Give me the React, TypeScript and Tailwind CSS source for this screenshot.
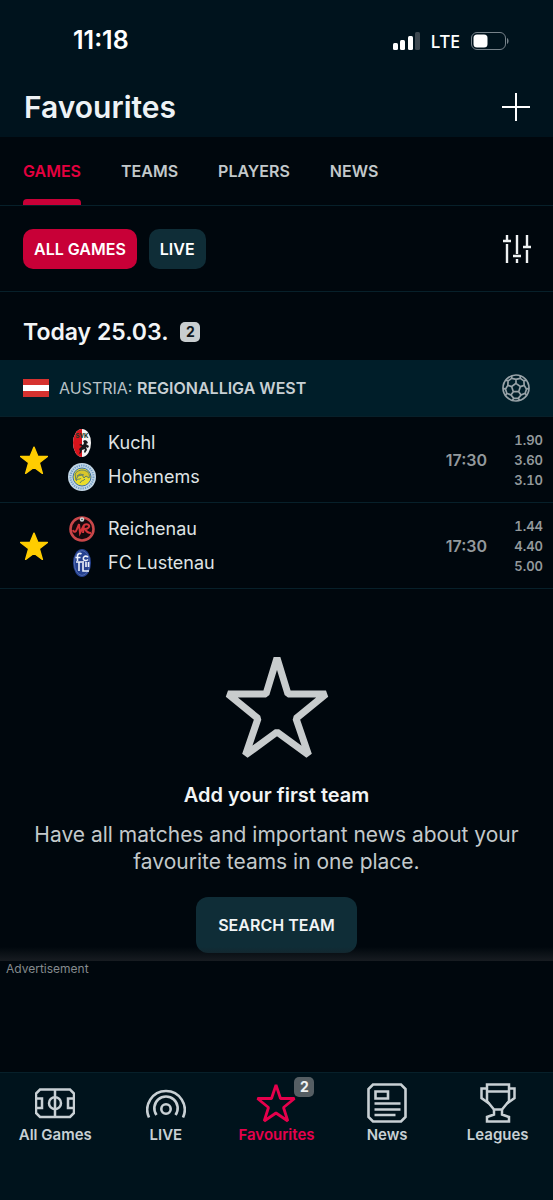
import { useState } from 'react';
import type { ReactNode } from 'react';

interface Team {
  name: string;
  crest: ReactNode;
}

interface Match {
  id: number;
  home: Team;
  away: Team;
  time: string;
  odds: string[];
}

const STAR_POINTS = '50,4 64,37.5 98,37.5 69,60 80,98 50,76 20,98 31,60 2,37.5 36,37.5';

function KuchlCrest() {
  return (
    <svg viewBox="0 0 28 28" className="size-7" aria-hidden="true">
      <ellipse cx="14" cy="14" rx="9" ry="14" fill="#f4f4f4" />
      <path d="M14 0A9 14 0 0 0 14 28Z" fill="#d8131b" />
      <path
        d="M17 11l2 1 1 2-2 1 3 2-1 2-2-1 1 3-2 3-1-1 1-3-3 1-1 3-2 1 1-3-1-2 3-3-3-1 2-1 2 1 1-2-1-2z"
        fill="#17191b"
      />
      <text x="14" y="9" textAnchor="middle" fontSize="6" fontWeight="800" fill="#1d3b2c">
        SVK
      </text>
    </svg>
  );
}

function HohenemsCrest() {
  return (
    <svg viewBox="0 0 28 28" className="size-7" aria-hidden="true">
      <circle cx="14" cy="14" r="14" fill="#c3d7e6" />
      <circle cx="14" cy="14" r="11.5" fill="none" stroke="#6f9cc6" strokeWidth="2" strokeDasharray="1.2 1.1" />
      <circle cx="14" cy="14" r="9" fill="#e9dc2b" stroke="#3b6fa3" strokeWidth="1" />
      <path d="M7 11c2-4 8-5 11-3 3 1 4 4 3 7l-3-2-2 2-2-3-4 1-2 4z" fill="#d9c62b" stroke="#5f7d6b" strokeWidth="1" />
      <path d="M8 18c2-3 4-1 5-3M12 20c1-3 4-2 5-4M9 13l3-2 4 1" fill="none" stroke="#5f7d6b" strokeWidth="1" />
    </svg>
  );
}

function ReichenauCrest() {
  return (
    <svg viewBox="0 0 28 28" className="size-7" aria-hidden="true">
      <circle cx="14" cy="14" r="11.5" fill="#16090d" stroke="#c9474a" strokeWidth="2.6" />
      <path
        d="M5 15c1 3 3 2 4-1l2-5 1 9 4-8-1 8M16 10c4-2 7 1 4 3-1 1-3 1-3 1s2 4 6 4"
        fill="none"
        stroke="#d5353a"
        strokeWidth="2"
      />
      <circle cx="14" cy="4.5" r="2.2" fill="#cfd6d6" />
      <circle cx="14" cy="4.5" r="0.8" fill="#27313a" />
    </svg>
  );
}

function LustenauCrest() {
  return (
    <svg viewBox="0 0 28 28" className="size-7" aria-hidden="true">
      <ellipse cx="14" cy="14" rx="9" ry="14" fill="#25418f" />
      <ellipse cx="14" cy="14" rx="7.6" ry="12.4" fill="none" stroke="#6f87c4" strokeWidth="0.6" />
      <path
        d="M13.5 5c-2-1.5-4 0-4 2v5M7.5 8.500h5M20 8c-3-2-5.500 0-4.500 2.500 1 1.500 3 1.500 4.500 0M8 13h6M11 13v9M15 12v10h6M18 13v5M20.500 13v5"
        fill="none"
        stroke="#eef2fa"
        strokeWidth="1.6"
      />
    </svg>
  );
}

function FootballIcon() {
  const at = (radius: number, degrees: number) => {
    const rad = (degrees * Math.PI) / 180;
    return `${(14 + radius * Math.cos(rad)).toFixed(2)} ${(14 + radius * Math.sin(rad)).toFixed(2)}`;
  };
  const spokes = [-90, -18, 54, 126, 198];
  const pentagon = `M${spokes.map((a) => at(4.6, a)).join('L')}Z`;
  const seams = spokes
    .map(
      (a) =>
        `M${at(4.6, a)}L${at(8.6, a)}M${at(13, a - 19)}L${at(10.6, a - 24)}L${at(8.6, a)}L${at(10.6, a + 24)}L${at(13, a + 19)}M${at(10.6, a + 24)}L${at(10.6, a + 48)}`,
    )
    .join('');

  return (
    <svg viewBox="0 0 28 28" className="size-7" fill="none" stroke="#98a3a8" strokeWidth="1.7" aria-hidden="true">
      <circle cx="14" cy="14" r="13" />
      <path d={pentagon + seams} />
    </svg>
  );
}

function PitchIcon() {
  return (
    <svg viewBox="0 0 40 40" className="size-10" fill="none" stroke="currentColor" strokeWidth="2.5" aria-hidden="true">
      <path d="M5 6.500h30l4 4v19.500l-4 4H5l-4-4V10.500zM20 6.500V34M1 15.500h6V25H1M39 15.500h-6V25h6" />
      <circle cx="20" cy="20.200" r="6" />
    </svg>
  );
}

function LiveIcon() {
  return (
    <svg viewBox="0 0 40 40" className="size-10" fill="none" stroke="currentColor" strokeWidth="2.6" aria-hidden="true">
      <circle cx="20" cy="26" r="4.700" />
      <path d="M10.500 32a11.700 11.700 0 1 1 19 0" />
      <path d="M3 34.500a18.700 18.700 0 1 1 34 0" />
    </svg>
  );
}

function StarIcon() {
  return (
    <svg viewBox="0 0 40 40" className="size-10" fill="none" stroke="currentColor" strokeWidth="2.8" aria-hidden="true">
      <path
        d="M20 2l4.500 13.500H38.500L27.500 24.500 31.800 38 20 30 8.200 38 12.500 24.500 1.500 15.500H15.500z"
        strokeLinejoin="bevel"
      />
    </svg>
  );
}

function NewsIcon() {
  return (
    <svg viewBox="0 0 40 40" className="size-10" fill="none" stroke="currentColor" strokeWidth="2.6" aria-hidden="true">
      <path d="M6 1.500h28l4.500 4.500v28L34 38.500H6L1.500 34V6z" />
      <path d="M8.500 8.500h12.500v7H8.500zM7.500 20.500h26M7.500 26.500h26M7.500 32h21" />
    </svg>
  );
}

function TrophyIcon() {
  return (
    <svg viewBox="0 0 40 40" className="size-10" fill="none" stroke="currentColor" strokeWidth="2.5" aria-hidden="true">
      <path d="M9 1.500h22v16.500l-7 8.500h-8l-7-8.500zM9 8.500H31" />
      <path d="M9 5.500H3.500v9.500l7.500 5.500M31 5.500h5.500v9.500L29 20.500" />
      <path d="M16 26.500v5l-7 2.500v4.500h22V34l-7-2.500v-5" />
    </svg>
  );
}

const tabs = ['GAMES', 'TEAMS', 'PLAYERS', 'NEWS'];

const matches: Match[] = [
  {
    id: 1,
    home: { name: 'Kuchl', crest: <KuchlCrest /> },
    away: { name: 'Hohenems', crest: <HohenemsCrest /> },
    time: '17:30',
    odds: ['1.90', '3.60', '3.10'],
  },
  {
    id: 2,
    home: { name: 'Reichenau', crest: <ReichenauCrest /> },
    away: { name: 'FC Lustenau', crest: <LustenauCrest /> },
    time: '17:30',
    odds: ['1.44', '4.40', '5.00'],
  },
];

const navItems = [
  { label: 'All Games', icon: <PitchIcon /> },
  { label: 'LIVE', icon: <LiveIcon /> },
  { label: 'Favourites', icon: <StarIcon />, badge: 2 },
  { label: 'News', icon: <NewsIcon /> },
  { label: 'Leagues', icon: <TrophyIcon /> },
];

function StatusBar() {
  return (
    <div className="flex h-[82px] items-center justify-between pr-11 pl-[73px]">
      <span className="text-[25px] font-semibold text-white">11:18</span>
      <div className="flex items-center gap-[11px]">
        <svg viewBox="0 0 27 18" className="h-[18px] w-[27px]" fill="#fff" aria-hidden="true">
          <rect x="0" y="11" width="5" height="7" rx="1.5" />
          <rect x="7" y="8" width="5" height="10" rx="1.5" />
          <rect x="15" y="4" width="5" height="14" rx="1.5" />
          <rect x="22" y="0" width="5" height="18" rx="1.5" fill="#3d4850" />
        </svg>
        <span className="font-['Noto_Sans',sans-serif] text-lg font-medium text-white">LTE</span>
        <svg viewBox="0 0 38 18" className="h-[18px] w-[38px]" aria-hidden="true">
          <rect x="0.5" y="0.5" width="34" height="17" rx="5.5" fill="none" stroke="#77828a" />
          <rect x="2.5" y="2.5" width="14" height="13" rx="3.5" fill="#fff" />
          <path d="M36 6v6c2-1 2-5 0-6z" fill="#77828a" />
        </svg>
      </div>
    </div>
  );
}

function MatchRow({ match }: { match: Match }) {
  const [starred, setStarred] = useState(true);

  return (
    <li className="flex h-[86px] items-center border-b border-[#07202a] pr-2.5 pl-5">
      <button
        type="button"
        aria-label="Toggle favourite"
        aria-pressed={starred}
        onClick={() => setStarred(!starred)}
        className={starred ? 'text-[#ffcd00]' : 'text-[#34444c]'}
      >
        <svg viewBox="0 0 100 100" className="size-7" aria-hidden="true">
          <polygon points={STAR_POINTS} fill="currentColor" stroke="currentColor" strokeWidth="5" strokeLinejoin="round" />
        </svg>
      </button>
      <div className="ml-5 flex flex-1 flex-col gap-1.5">
        {[match.home, match.away].map((team) => (
          <div key={team.name} className="flex items-center gap-3">
            {team.crest}
            <span className="text-lg leading-7 text-[#dfe3e4]">{team.name}</span>
          </div>
        ))}
      </div>
      <span className="text-base font-semibold text-[#93999c]">{match.time}</span>
      <div className="ml-5 w-9 text-right text-[13px] leading-5 font-semibold text-[#93999c] tabular-nums">
        {match.odds.map((odd) => (
          <div key={odd}>{odd}</div>
        ))}
      </div>
    </li>
  );
}

export default function App() {
  const [activeTab, setActiveTab] = useState('GAMES');
  const [liveOnly, setLiveOnly] = useState(false);
  const [activeNav, setActiveNav] = useState('Favourites');

  return (
    <div className="flex min-h-screen flex-col bg-[#00070d] font-[Inter,sans-serif] text-white">
      <header className="bg-[#00131d]">
        <StatusBar />
        <div className="flex h-[55px] items-start justify-between px-6">
          <h1 className="text-[30px] leading-[50px] font-semibold text-[#eef2f5]">Favourites</h1>
          <button type="button" aria-label="Add favourite" className="-mr-0.5 mt-2.5">
            <svg viewBox="0 0 30 30" className="size-[30px]" stroke="#fff" strokeWidth="2" aria-hidden="true">
              <path d="M15 1v28M1 15h28" />
            </svg>
          </button>
        </div>
      </header>

      <nav className="flex h-[69px] gap-10 border-b border-[#07202a] px-[23px]">
        {tabs.map((tab) => (
          <button
            key={tab}
            type="button"
            onClick={() => setActiveTab(tab)}
            className={`relative text-base font-semibold ${activeTab === tab ? 'text-[#e4003f]' : 'text-[#c3c9cb]'}`}
          >
            {tab}
            {activeTab === tab && (
              <span className="absolute inset-x-0 bottom-0 h-1.5 rounded-t-sm bg-[#c80037]" />
            )}
          </button>
        ))}
      </nav>

      <div className="flex h-[86px] items-center gap-3 border-b border-[#07202a] px-[23px]">
        <button
          type="button"
          onClick={() => setLiveOnly(false)}
          className={`h-10 rounded-[10px] px-[11px] text-base font-semibold ${liveOnly ? 'bg-[#0f2d37]' : 'bg-[#c80037]'}`}
        >
          ALL GAMES
        </button>
        <button
          type="button"
          onClick={() => setLiveOnly(true)}
          className={`h-10 rounded-[10px] px-[11px] text-base font-semibold ${liveOnly ? 'bg-[#c80037]' : 'bg-[#0f2d37]'}`}
        >
          LIVE
        </button>
        <button type="button" aria-label="Filters" className="-mr-0.5 ml-auto">
          <svg viewBox="0 0 30 30" className="size-[30px]" stroke="#eef1f2" strokeWidth="2.4" aria-hidden="true">
            <path d="M5 1v5M1 7h8M5 10v19M15 1v19M11 22h8M15 25v4M25 1v11M21 13h8M25 16v13" />
          </svg>
        </button>
      </div>

      <main>
        <div className="flex h-[68px] items-center gap-3 px-[23px] pt-3">
          <h2 className="text-[23px] font-semibold text-[#f3f5f6]">Today 25.03.</h2>
          <span className="flex size-5 items-center justify-center rounded-[5px] bg-[#c8cdcf] text-sm font-bold text-[#10181c]">
            2
          </span>
        </div>

        <div className="flex h-[57px] items-center border-b border-[#07202a] bg-[#001e29] px-[23px]">
          <svg viewBox="0 0 26 18" className="h-[18px] w-[26px]" role="img" aria-label="Austria">
            <rect width="26" height="18" fill="#d6322f" />
            <rect y="6" width="26" height="6" fill="#fff" />
          </svg>
          <h3 className="ml-2.5 text-base text-[#b8c2c6]">
            AUSTRIA: <span className="font-semibold text-[#c8d0d4]">REGIONALLIGA WEST</span>
          </h3>
          <span className="ml-auto">
            <FootballIcon />
          </span>
        </div>

        <ul>
          {matches.map((match) => (
            <MatchRow key={match.id} match={match} />
          ))}
        </ul>

        <section className="flex flex-col items-center px-6 pt-[66px] pb-2 text-center">
          <svg viewBox="0 0 104 104" className="size-[104px]" fill="none" stroke="#c8cccd" strokeWidth="7" aria-hidden="true">
            <path
              d="M52 3L63 39H101L71 63.500 83.500 100 52 77 20.500 100 33 63.500 3 39H41z"
              strokeLinejoin="bevel"
            />
          </svg>
          <h2 className="mt-5 text-xl leading-8 font-semibold text-[#f1f4f5]">Add your first team</h2>
          <p className="mt-2.5 text-[21px] leading-[27px] text-[#c3c9cb]">
            Have all matches and important news about your favourite teams in one place.
          </p>
          <button
            type="button"
            className="mt-[22px] h-14 rounded-xl bg-[#0f2d37] px-[22px] text-base font-semibold text-[#f1f4f5]"
          >
            SEARCH TEAM
          </button>
        </section>
      </main>

      <aside className="relative flex-1 px-1.5">
        <div className="absolute inset-x-0 bottom-full h-3.5 bg-linear-to-t from-[#1a1e23]/90 to-transparent" />
        <p className="text-xs leading-4 text-[#858b8e]">Advertisement</p>
      </aside>

      <footer className="h-32 border-t border-[#07202a] bg-[#00131c]">
        <nav className="grid grid-cols-5 pt-2.5">
          {navItems.map((item) => (
            <button
              key={item.label}
              type="button"
              onClick={() => setActiveNav(item.label)}
              className={`flex flex-col items-center text-[15px] leading-6 font-semibold ${
                activeNav === item.label ? 'text-[#e6004c]' : 'text-[#c8d0d4]'
              }`}
            >
              <span className="relative">
                {item.icon}
                {item.badge && (
                  <span className="absolute -top-1.5 -right-[18px] flex size-5 items-center justify-center rounded-[5px] bg-[#555e63] text-sm font-bold text-[#eef1f2]">
                    {item.badge}
                  </span>
                )}
              </span>
              {item.label}
            </button>
          ))}
        </nav>
      </footer>
    </div>
  );
}
